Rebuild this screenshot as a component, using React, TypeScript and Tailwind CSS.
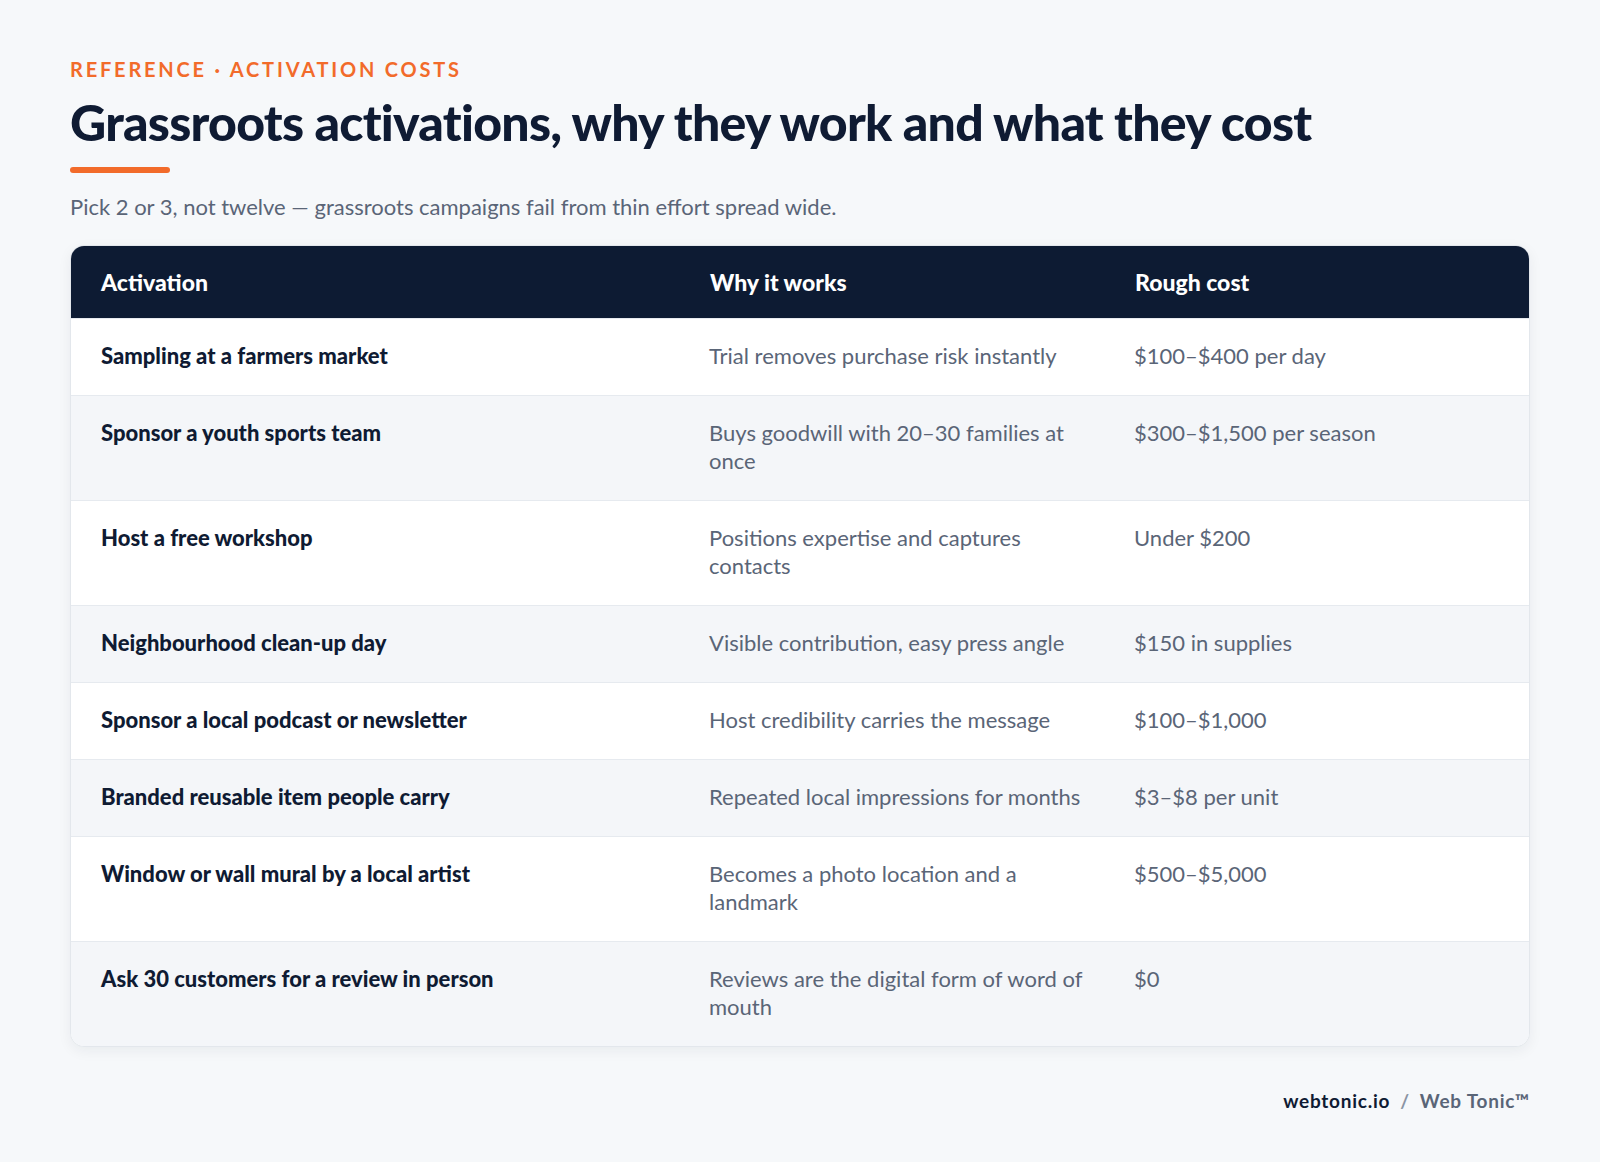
const rows = [
  ["Sampling at a farmers market", "Trial removes purchase risk instantly", "$100–$400 per day"],
  ["Sponsor a youth sports team", "Buys goodwill with 20–30 families at once", "$300–$1,500 per season"],
  ["Host a free workshop", "Positions expertise and captures contacts", "Under $200"],
  ["Neighbourhood clean-up day", "Visible contribution, easy press angle", "$150 in supplies"],
  ["Sponsor a local podcast or newsletter", "Host credibility carries the message", "$100–$1,000"],
  ["Branded reusable item people carry", "Repeated local impressions for months", "$3–$8 per unit"],
  ["Window or wall mural by a local artist", "Becomes a photo location and a landmark", "$500–$5,000"],
  ["Ask 30 customers for a review in person", "Reviews are the digital form of word of mouth", "$0"],
];

export default function App() {
  return (
    <div className="min-h-[1162px] w-[1600px] bg-[#f6f8fa] px-[70px] pt-[56px] text-[#0f1b33]" style={{ fontFamily: "Lato, 'Noto Sans', sans-serif" }}>
      <div className="text-[20px] font-bold tracking-[0.14em] text-[#f26b2a] leading-[26px]">REFERENCE · ACTIVATION COSTS</div>
      <h1 className="mt-[10px] text-[50px] font-black leading-[60px] tracking-[-0.015em] text-[#0f1b33]">Grassroots activations, why they work and what they cost</h1>
      <div className="mt-[15px] h-[6px] w-[100px] rounded-full bg-[#f26b2a]" />
      <p className="mt-[20px] text-[22px] leading-[28px] text-[#5a6577]">Pick 2 or 3, not twelve — grassroots campaigns fail from thin effort spread wide.</p>
      <div className="mt-[24px] overflow-hidden rounded-[14px] border border-[#e3e7ec] bg-white shadow-[0_4px_14px_rgba(15,27,51,0.06)]">
        <div className="grid grid-cols-[638px_425px_1fr] bg-[#0d1b33] text-[23px] font-black leading-[28px] text-white">
          <div className="py-[22px] pl-[30px]">Activation</div>
          <div className="py-[22px] pl-[1px]">Why it works</div>
          <div className="py-[22px] pl-[1px]">Rough cost</div>
        </div>
        {rows.map((r, i) => (
          <div key={i} className={`grid grid-cols-[638px_425px_1fr] border-t border-[#e6eaef] text-[22px] leading-[28px] ${i % 2 === 1 ? "bg-[#f4f6f9]" : "bg-white"}`}>
            <div className="pt-[23px] pb-[25px] pl-[30px] font-black text-[#0f1b33]">{r[0]}</div>
            <div className="pt-[23px] pb-[25px] pr-[50px] text-[#5a6577]">{r[1]}</div>
            <div className="pt-[23px] pb-[25px] text-[#5a6577]">{r[2]}</div>
          </div>
        ))}
      </div>
      <div className="mt-[40px] flex justify-end text-[19px] font-bold tracking-[0.04em]">
        <span className="text-[#0f1b33]">webtonic.io</span>
        <span className="mx-[10px] text-[#8a94a3]">/</span>
        <span className="text-[#5a6577]">Web Tonic™</span>
      </div>
    </div>
  );
}
